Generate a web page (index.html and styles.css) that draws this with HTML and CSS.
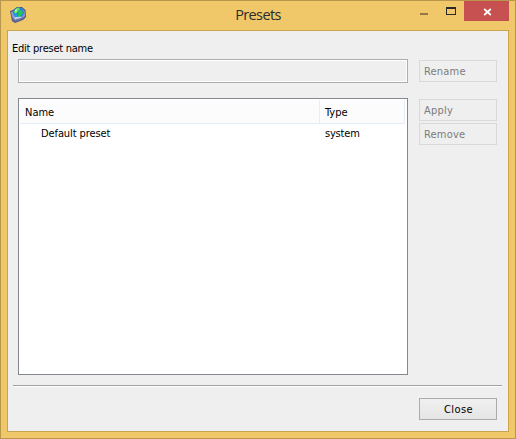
FILE: index.html
```html
<!DOCTYPE html>
<html lang="en">
<head>
    <meta charset="UTF-8">
    <title>Presets</title>
    <link rel="stylesheet" href="styles.css">
</head>
<body>
<div class="window">
    <div class="titlebar">
        <svg class="app-icon" width="18" height="18" viewBox="0 0 18 18">
            <path d="M1 5 L4 4 L8 1 L13 1 L16.5 4 L17 11 L14 14 L6 17 L3 15 L2 10 Z" fill="#4e5783"/>
            <path d="M2 6 L5 5 L8 2 L13 2 L15.5 5 L16 10 L13 13 L6 14 L3 11 Z" fill="#8d9bca"/>
            <path d="M3.5 12 L6 14 L14 11 L14 13 L6.5 16 L4 14.5 Z" fill="#66719f"/>
            <circle cx="9.5" cy="6.5" r="5.2" fill="#147bdd"/>
            <path d="M5 6 Q6 2 10 1.6 L11 3 L9 5 L8 7 L6 8 Z" fill="#65e35a"/>
            <path d="M10 4 L13 4 L14 7 L12 10 L9 11 L9 7 Z" fill="#27c25f"/>
            <path d="M5 8 L8 7 L9 11 L6 11 Z" fill="#209be8"/>
            <path d="M6 4 L8 3 L8 5 L6 6 Z" fill="#b9f4a4"/>
            <path d="M5 11.5 L12 10.5 L13 11.5 L6 13.5 Z" fill="#c3cdec"/>
        </svg>
        <span class="title">Presets</span>
        <div class="controls">
            <span class="minimize"></span>
            <span class="maximize"></span>
            <span class="close">
                <svg width="9" height="8" viewBox="0 0 9 8">
                    <path d="M1.2 1 L7.8 7 M7.8 1 L1.2 7" stroke="#fff" stroke-width="1.7"/>
                </svg>
            </span>
        </div>
    </div>
    <div class="client">
        <label class="label" for="preset-name">Edit preset name</label>
        <div class="row edit-row">
            <input class="name-input" id="preset-name" type="text" disabled>
            <button class="button" disabled>Rename</button>
        </div>
        <div class="row list-row">
            <div class="list">
                <div class="list-header">
                    <span class="col-name">Name</span>
                    <span class="col-type">Type</span>
                </div>
                <div class="list-item">
                    <span class="col-name">Default preset</span>
                    <span class="col-type">system</span>
                </div>
            </div>
            <div class="actions">
                <button class="button" disabled>Apply</button>
                <button class="button" disabled>Remove</button>
            </div>
        </div>
        <div class="separator"></div>
        <div class="footer">
            <button class="button button-close">Close</button>
        </div>
    </div>
</div>
</body>
</html>
```

FILE: styles.css
```css
* {
    box-sizing: border-box;
}
body {
    margin: 0;
    font-family: "DejaVu Sans Condensed", "DejaVu Sans", sans-serif;
    font-stretch: condensed;
    font-size: 11px;
    color: #000;
}
.window {
    width: 516px;
    height: 439px;
    padding: 0 6px;
    border: 1px solid #b8974c;
    background-color: #f0c869;
}

/* title bar */
.titlebar {
    display: grid;
    grid-template-columns: 100px 1fr 100px;
    height: 29px;
}
.app-icon {
    margin: 5px 0 0 2px;
}
.title {
    padding-top: 4px;
    font-family: "Open Sans", "Noto Sans", sans-serif;
    font-stretch: normal;
    font-size: 14.5px;
    line-height: 20px;
    letter-spacing: -0.6px;
    text-align: center;
    color: #2b2b2b;
}
.controls {
    display: flex;
    align-items: flex-start;
}
.minimize {
    width: 8px;
    height: 2px;
    margin: 12px 0 0 11px;
    background-color: #93784a;
}
.maximize {
    width: 10px;
    height: 8px;
    margin: 6px 0 0 18px;
    border: 1px solid #2a2a2a;
    border-top-width: 2px;
}
.close {
    display: flex;
    align-items: center;
    justify-content: center;
    width: 45px;
    height: 20px;
    padding: 1px 0 0 1px;
    margin-left: 8px;
    background-color: #c75050;
}

/* dialog body */
.client {
    width: 502px;
    height: 402px;
    padding: 11px 5px 0 5px;
    border: 1px solid #c9a44f;
    background-color: #efefef;
}
.label {
    display: block;
    height: 17px;
    margin-left: -1px;
    line-height: 14px;
    letter-spacing: -0.25px;
}
.row {
    display: flex;
    gap: 11px;
    margin-left: 5px;
}
.edit-row {
    align-items: center;
    height: 24px;
}
.name-input {
    width: 390px;
    height: 24px;
    border: 1px solid #abadb3;
    background-color: #efefef;
    box-shadow: inset 0 0 0 1px #fff;
}
.button {
    display: block;
    width: 78px;
    height: 22px;
    padding: 1px 0 0 4px;
    border: 1px solid #d9d9d9;
    background-color: #efefef;
    font-family: "DejaVu Sans Condensed", "DejaVu Sans", sans-serif;
    font-stretch: condensed;
    font-size: 11px;
    line-height: 19px;
    letter-spacing: 0.2px;
    text-align: left;
    color: #7c7c7c;
}
.list-row {
    margin-top: 15px;
}
.list {
    width: 390px;
    height: 277px;
    padding: 1px;
    border: 1px solid #828790;
    background-color: #fff;
}
.list-header {
    display: flex;
    width: 385px;
    height: 24px;
    border-right: 1px solid #e5eef8;
    border-bottom: 1px solid #e5eef8;
    background-color: #fcfcfc;
    line-height: 25px;
}
.list-header .col-name {
    width: 300px;
    padding-left: 5px;
    border-right: 1px solid #e5eef8;
}
.col-type {
    padding-left: 5px;
}
.list-item {
    display: flex;
    height: 19px;
    line-height: 19px;
    letter-spacing: -0.1px;
}
.list-item .col-name {
    width: 300px;
    padding-left: 21px;
}
.list-item .col-type {
    letter-spacing: -0.2px;
}
.actions {
    display: flex;
    flex-direction: column;
    gap: 2px;
    padding-top: 1px;
}
.separator {
    width: 489px;
    height: 2px;
    margin-top: 10px;
    border-top: 1px solid #a0a0a0;
    border-bottom: 1px solid #fff;
}
.footer {
    display: flex;
    justify-content: flex-end;
    padding: 11px 6px 0 0;
}
.button-close {
    padding: 1px 0 0 1px;
    border-color: #acacac;
    background: linear-gradient(#f0f0f0, #e5e5e5);
    text-align: center;
    letter-spacing: 0.4px;
    color: #000;
}
```
